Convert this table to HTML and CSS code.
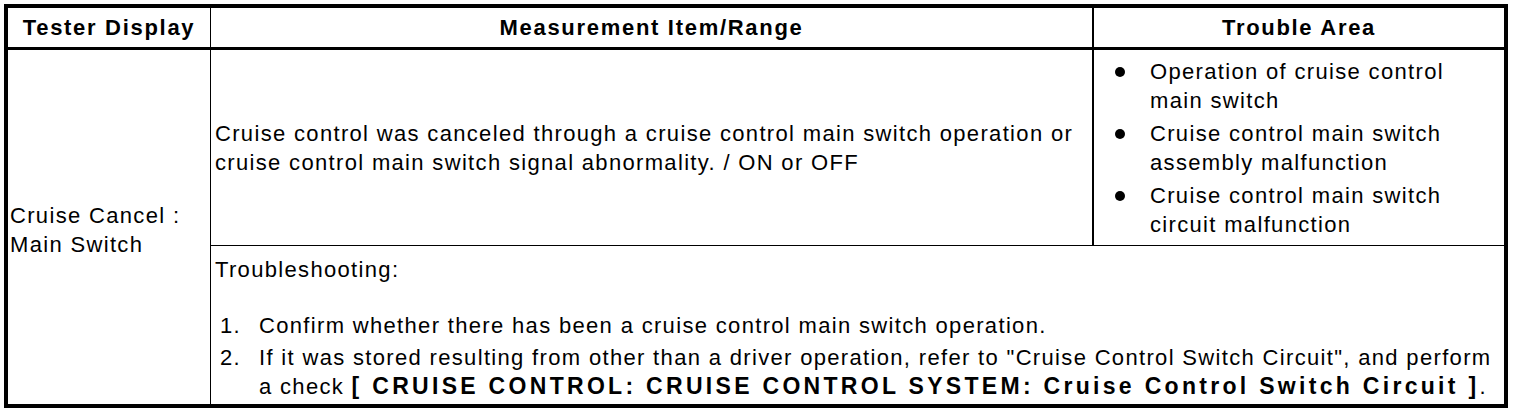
FILE: index.html
```html
<!DOCTYPE html>
<html>
<head>
<meta charset="utf-8">
<link rel="stylesheet" href="styles.css">
</head>
<body>
<table class="tbl">
  <colgroup>
    <col class="c1">
    <col class="c2">
    <col class="c3">
  </colgroup>
  <thead>
    <tr class="hrow">
      <th class="cell-a">Tester Display</th>
      <th class="cell-b">Measurement Item/Range</th>
      <th class="cell-c">Trouble Area</th>
    </tr>
  </thead>
  <tbody>
    <tr class="row1">
      <td class="cell-a name" rowspan="2">Cruise Cancel :<br>Main Switch</td>
      <td class="cell-b meas">Cruise control was canceled through a cruise control main switch operation or cruise control main switch signal abnormality. / ON or OFF</td>
      <td class="cell-c area">
        <ul class="bullets">
          <li>Operation of cruise control main switch</li>
          <li>Cruise control main switch assembly malfunction</li>
          <li>Cruise control main switch circuit malfunction</li>
        </ul>
      </td>
    </tr>
    <tr class="row2">
      <td class="cell-last ts" colspan="2">
        <div class="ts-inner">
          <div class="ts-title">Troubleshooting:</div>
          <ol class="steps">
            <li><span class="num">1.</span><span class="txt">Confirm whether there has been a cruise control main switch operation.</span></li>
            <li><span class="num">2.</span><span class="txt">If it was stored resulting from other than a driver operation, refer to "Cruise Control Switch Circuit", and perform a check <b class="xref">[ CRUISE CONTROL: CRUISE CONTROL SYSTEM: Cruise Control Switch Circuit ]</b>.</span></li>
          </ol>
        </div>
      </td>
    </tr>
  </tbody>
</table>
</body>
</html>
```

FILE: styles.css
```css
html, body {
  margin: 0;
  padding: 0;
  background: #fff;
}
body {
  padding: 4px;
  font-family: "Liberation Sans", Arial, sans-serif;
  font-size: 22px;
  letter-spacing: 1.33px;
  color: #000;
}
.tbl {
  border: 4px solid #000;
  border-collapse: separate;
  border-spacing: 0;
  table-layout: fixed;
  width: 1504px;
}
.c1 { width: 203px; }
.c2 { width: 883px; }
.c3 { width: 410px; }

th, td {
  padding: 0;
  vertical-align: middle;
  line-height: 29px;
}
th {
  font-weight: bold;
  letter-spacing: 1.7px;
  text-align: center;
  height: 39px;
  border-bottom: 3px solid #000;
}
.cell-a { border-right: 1px solid #000; }
.cell-b { border-right: 2px solid #000; }

.name {
  padding: 5px 0 0 2px;
  text-align: left;
}
.row1 td.meas,
.row1 td.area {
  height: 195px;
  border-bottom: 1px solid #000;
}
.meas {
  padding-left: 4px;
}
.bullets {
  list-style: none;
  margin: 0;
  padding: 0 0 0 56px;
}
.bullets li {
  position: relative;
  margin: 4px 0;
}
.bullets li::before {
  content: "";
  position: absolute;
  left: -35px;
  top: 10px;
  width: 10px;
  height: 10px;
  border-radius: 50%;
  background: #000;
}
.row2 td.ts {
  height: 158px;
  vertical-align: top;
}
.ts-inner {
  padding: 9px 0 0 4px;
}
.ts-title {
  margin-bottom: 27px;
}
.steps {
  list-style: none;
  margin: 0;
  padding: 0;
}
.steps li {
  display: flex;
  margin-bottom: 3px;
}
.num {
  flex: 0 0 auto;
  width: 44px;
  padding-left: 5px;
  box-sizing: border-box;
}
.txt {
  flex: 1 1 auto;
}
.xref {
  font-size: 23px;
  letter-spacing: 3.3px;
}
```
